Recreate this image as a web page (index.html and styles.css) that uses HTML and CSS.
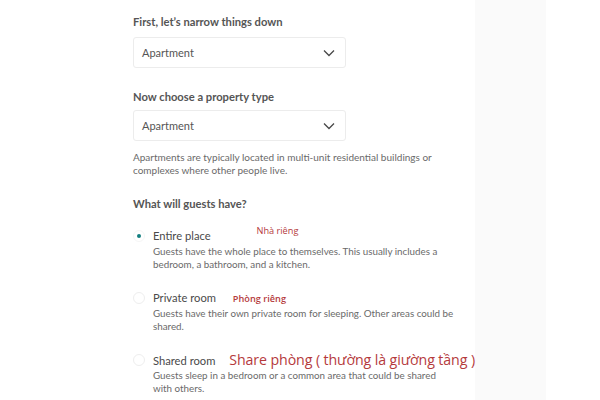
FILE: index.html
```html
<!DOCTYPE html>
<html>
<head>
<meta charset="utf-8">
<link rel="stylesheet" href="styles.css">
</head>
<body>
<div class="page">
  <main class="main">
    <div class="label first">First, let’s narrow things down</div>
    <div class="select sel1">
      <span>Apartment</span>
      <svg class="chev" width="12" height="8" viewBox="0 0 12 8"><path d="M1 1.5 L6 6.5 L11 1.5" fill="none" stroke="#484848" stroke-width="1.3"/></svg>
    </div>
    <div class="label second">Now choose a property type</div>
    <div class="select sel2">
      <span>Apartment</span>
      <svg class="chev" width="12" height="8" viewBox="0 0 12 8"><path d="M1 1.5 L6 6.5 L11 1.5" fill="none" stroke="#484848" stroke-width="1.3"/></svg>
    </div>
    <p class="help">Apartments are typically located in multi-unit residential buildings or complexes where other people live.</p>
    <div class="label heading">What will guests have?</div>
    <div class="options">
      <div class="option">
        <span class="radio checked"></span>
        <div class="opt-body">
          <div class="opt-title">Entire place <span class="note small n1">Nhà riêng</span></div>
          <div class="opt-desc">Guests have the whole place to themselves. This usually includes a bedroom, a bathroom, and a kitchen.</div>
        </div>
      </div>
      <div class="option">
        <span class="radio"></span>
        <div class="opt-body">
          <div class="opt-title">Private room <span class="note small n2">Phòng riêng</span></div>
          <div class="opt-desc">Guests have their own private room for sleeping. Other areas could be shared.</div>
        </div>
      </div>
      <div class="option">
        <span class="radio"></span>
        <div class="opt-body">
          <div class="opt-title">Shared room <span class="note big">Share phòng ( thường là giường tầng )</span></div>
          <div class="opt-desc">Guests sleep in a bedroom or a common area that could be shared with others.</div>
        </div>
      </div>
    </div>
  </main>
  <aside class="side"></aside>
</div>
</body>
</html>
```

FILE: styles.css
```css
html, body {
  margin: 0;
  padding: 0;
  background: #ffffff;
}
.page {
  display: flex;
  width: 600px;
  height: 400px;
  overflow: hidden;
}
.main {
  position: relative;
  z-index: 1;
  width: 342px;
  padding-left: 133px;
  font-family: Lato, "Liberation Sans", sans-serif;
  color: #484848;
}
.side {
  width: 71px;
  background: #fafafa;
}
.label {
  font-size: 11.2px;
  font-weight: 700;
  line-height: 14px;
  color: #555555;
}
.first { margin-top: 15px; }
.second { margin-top: 22px; }
.heading { margin-top: 20px; }
.select {
  box-sizing: border-box;
  width: 213px;
  height: 31px;
  border: 1px solid #ececec;
  border-radius: 3px;
  display: flex;
  align-items: center;
  justify-content: space-between;
  padding: 0 10px 0 8px;
  font-size: 11px;
  color: #555;
}
.sel1 { margin-top: 8px; }
.sel2 { margin-top: 6px; }
.help {
  margin: 10px 0 0 0;
  width: 320px;
  font-size: 10px;
  line-height: 13px;
  color: #6a6a6a;
}
.options {
  margin-top: 18px;
  display: flex;
  flex-direction: column;
  gap: 20px;
}
.option {
  display: flex;
  align-items: flex-start;
}
.radio {
  box-sizing: border-box;
  width: 12px;
  height: 12px;
  border: 1px solid #eeeeee;
  border-radius: 50%;
  margin: 1px 0 0 0;
  flex: none;
  display: flex;
  align-items: center;
  justify-content: center;
}
.radio.checked {
  border-color: #f6f6f6;
}
.radio.checked::after {
  content: "";
  width: 4px;
  height: 4px;
  border-radius: 50%;
  background: #137f80;
}
.opt-body {
  margin-left: 8px;
  width: 301px;
}
.opt-title {
  height: 14px;
  font-size: 11.2px;
  line-height: 14px;
  color: #4a4a4a;
  white-space: nowrap;
}
.opt-desc {
  margin-top: 2px;
  font-size: 9.8px;
  line-height: 13px;
  color: #6a6a6a;
}
.note {
  font-family: "Open Sans", "Liberation Sans", sans-serif;
  color: #b53a3c;
  line-height: 1;
}
.note.small {
  font-size: 9.2px;
}
.n1 {
  position: relative;
  top: -6px;
  margin-left: 43px;
}
.n2 {
  font-weight: 600;
  margin-left: 14px;
}
.note.big {
  font-size: 14.2px;
  letter-spacing: -0.1px;
  margin-left: 11px;
}
```
